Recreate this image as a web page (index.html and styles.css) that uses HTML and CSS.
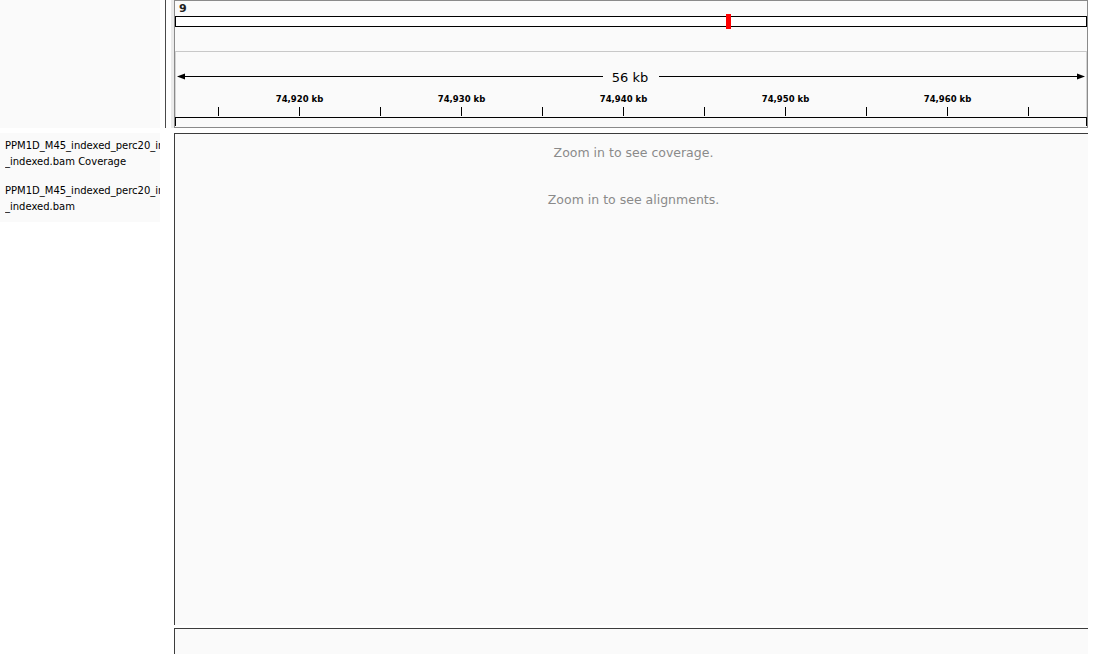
FILE: index.html
```html
<!DOCTYPE html>
<html>
<head>
<meta charset="utf-8">
<title>IGV</title>
<link rel="stylesheet" href="styles.css">
</head>
<body>
<div class="app">
  <div class="row header-row">
    <div class="names names-head"></div>
    <div class="sep sep-head"><div class="sep-line"></div><div class="sep-strip"></div></div>
    <div class="panel header-panel">
      <div class="chrom">
        <div class="chrom-label">9</div>
        <div class="ideogram"><div class="ideo-mark"></div></div>
      </div>
      <div class="ruler">
        <svg class="ruler-svg" width="910" height="65" viewBox="0 0 910 65">
          <line x1="6" y1="24.5" x2="427" y2="24.5" stroke="#000" stroke-width="1"/>
          <line x1="483" y1="24.5" x2="904" y2="24.5" stroke="#000" stroke-width="1"/>
          <polygon points="1,24.5 9,21.5 9,27.5" fill="#000"/>
          <polygon points="909,24.5 901,21.5 901,27.5" fill="#000"/>
          <text class="span-text" x="454" y="30" text-anchor="middle">56 kb</text>
          <text class="tick-text" x="123.5" y="50" text-anchor="middle">74,920 kb</text>
          <text class="tick-text" x="285.5" y="50" text-anchor="middle">74,930 kb</text>
          <text class="tick-text" x="447.5" y="50" text-anchor="middle">74,940 kb</text>
          <text class="tick-text" x="609.5" y="50" text-anchor="middle">74,950 kb</text>
          <text class="tick-text" x="771.5" y="50" text-anchor="middle">74,960 kb</text>
          <g stroke="#000" stroke-width="1">
            <line x1="42.5" y1="55" x2="42.5" y2="64"/>
            <line x1="123.5" y1="55" x2="123.5" y2="64"/>
            <line x1="204.5" y1="55" x2="204.5" y2="64"/>
            <line x1="285.5" y1="55" x2="285.5" y2="64"/>
            <line x1="366.5" y1="55" x2="366.5" y2="64"/>
            <line x1="447.5" y1="55" x2="447.5" y2="64"/>
            <line x1="528.5" y1="55" x2="528.5" y2="64"/>
            <line x1="609.5" y1="55" x2="609.5" y2="64"/>
            <line x1="690.5" y1="55" x2="690.5" y2="64"/>
            <line x1="771.5" y1="55" x2="771.5" y2="64"/>
            <line x1="852.5" y1="55" x2="852.5" y2="64"/>
          </g>
        </svg>
      </div>
      <div class="seqbox"></div>
    </div>
  </div>

  <div class="row data-row">
    <div class="names names-data">
      <div class="track-name tn-cov">
        <div class="tn-line">PPM1D_M45_indexed_perc20_in</div>
        <div class="tn-line">_indexed.bam Coverage</div>
      </div>
      <div class="track-name tn-aln">
        <div class="tn-line">PPM1D_M45_indexed_perc20_in</div>
        <div class="tn-line">_indexed.bam</div>
      </div>
    </div>
    <div class="sep"></div>
    <div class="panel data-panel">
      <div class="msg msg-cov">Zoom in to see coverage.</div>
      <div class="msg msg-aln">Zoom in to see alignments.</div>
    </div>
  </div>

  <div class="row bottom-row">
    <div class="names"></div>
    <div class="sep"></div>
    <div class="panel bottom-panel"></div>
  </div>
</div>
</body>
</html>
```

FILE: styles.css
```css
* { box-sizing: border-box; }

html, body {
  margin: 0;
  padding: 0;
  background: #ffffff;
}

body {
  width: 1110px;
  height: 654px;
  overflow: hidden;
  font-family: "DejaVu Sans", "Liberation Sans", sans-serif;
}

.app {
  display: flex;
  flex-direction: column;
}

.row {
  display: flex;
  flex-direction: row;
}

.names {
  width: 160px;
  flex: 0 0 160px;
  overflow: hidden;
}

.sep {
  width: 14px;
  flex: 0 0 14px;
}

.panel {
  width: 914px;
  flex: 0 0 914px;
}

/* header row */
.header-row {
  height: 128px;
  margin-bottom: 5px;
}

.names-head {
  background: #fafafa;
}

.sep-head {
  display: flex;
  padding-left: 5px;
}

.sep-line {
  width: 1px;
  background: #4a4a4a;
}

.sep-strip {
  width: 3px;
  margin-left: 5px;
  background: #ebebeb;
}

.header-panel {
  height: 128px;
  border: 1px solid #8a8a8a;
  background: #fafafa;
  display: flex;
  flex-direction: column;
}

.chrom {
  height: 50px;
  flex: 0 0 50px;
}

.chrom-label {
  margin-top: 1px;
  padding-left: 4px;
  font-weight: bold;
  font-size: 11px;
  line-height: 13px;
  height: 13px;
  color: #222;
}

.ideogram {
  position: relative;
  margin-top: 1px;
  height: 11px;
  border: 1px solid #000;
  background: #ffffff;
}

.ideo-mark {
  position: absolute;
  left: 550px;
  top: -3px;
  width: 5px;
  height: 15px;
  background: #ff0000;
}

.ruler {
  height: 66px;
  flex: 0 0 66px;
  border-top: 1px solid #c8c8c8;
  border-left: 1px solid #d4d4d4;
  border-right: 1px solid #d4d4d4;
}

.ruler-svg {
  display: block;
}

.span-text {
  font-family: "DejaVu Sans", sans-serif;
  font-size: 13px;
  fill: #000;
}

.tick-text {
  font-family: "DejaVu Sans", sans-serif;
  font-weight: bold;
  font-size: 8.5px;
  fill: #000;
}

.seqbox {
  height: 9px;
  flex: 0 0 9px;
  border-top: 1px solid #000;
  border-left: 1px solid #000;
  border-right: 1px solid #000;
}

/* data row */
.data-row {
  height: 492px;
  margin-bottom: 3px;
}

.track-name {
  background: #fafafa;
  padding-left: 5px;
  padding-top: 5px;
  font-size: 10px;
  line-height: 16px;
  color: #000;
}

.tn-cov {
  height: 45px;
}

.tn-aln {
  height: 44px;
}

.tn-line {
  white-space: nowrap;
  overflow: hidden;
}

.data-panel {
  height: 492px;
  border-top: 1px solid #3c3c3c;
  border-left: 1px solid #3c3c3c;
  background: #fafafa;
  padding-top: 11px;
  padding-left: 4px;
  display: flex;
  flex-direction: column;
  align-items: center;
}

.msg {
  font-size: 12.5px;
  line-height: 16px;
  color: #8a8a8a;
}

.msg-aln {
  margin-top: 31px;
}

/* bottom row */
.bottom-row {
  height: 26px;
}

.bottom-panel {
  height: 26px;
  border-top: 1px solid #3c3c3c;
  border-left: 1px solid #3c3c3c;
  background: #fafafa;
}
```
